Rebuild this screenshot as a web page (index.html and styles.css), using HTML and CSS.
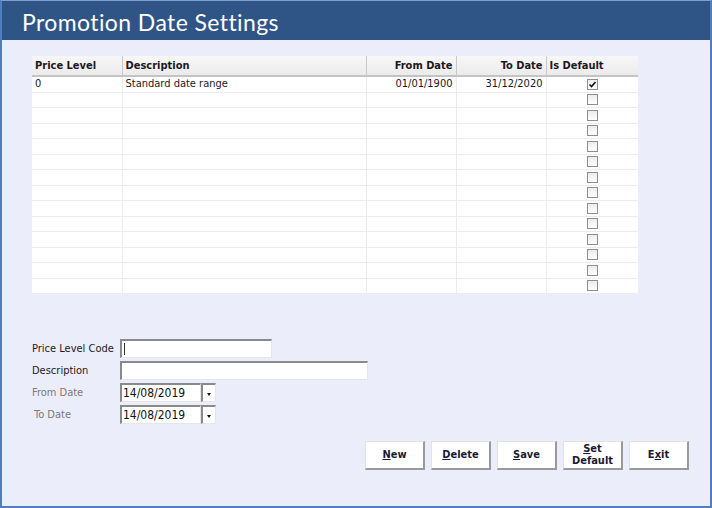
FILE: index.html
```html
<!DOCTYPE html>
<html lang="en">
<head>
  <meta charset="UTF-8">
  <title>Promotion Date Settings</title>
  <link rel="stylesheet" href="styles.css">
</head>
<body>
  <div class="window">
    <div class="title-bar">Promotion Date Settings</div>

    <div class="content">
      <!-- Date range grid -->
      <table class="grid" id="grid">
        <thead>
          <tr>
            <th class="col-level">Price Level</th>
            <th class="col-desc">Description</th>
            <th class="col-date right">From Date</th>
            <th class="col-date right">To Date</th>
            <th class="col-default">Is Default</th>
          </tr>
        </thead>
        <tbody id="gridBody"></tbody>
      </table>

      <!-- Edit form -->
      <div class="form">
        <label class="field-label">Price Level Code</label>
        <div class="textbox short"><span class="caret"></span></div>

        <label class="field-label">Description</label>
        <div class="textbox long"></div>

        <label class="field-label muted">From Date</label>
        <div class="datebox">
          <div class="textbox date">14/08/2019</div>
          <div class="drop"><span class="arrow"></span></div>
        </div>

        <label class="field-label muted indent">To Date</label>
        <div class="datebox">
          <div class="textbox date">14/08/2019</div>
          <div class="drop"><span class="arrow"></span></div>
        </div>
      </div>

      <div class="buttons">
        <button><u>N</u>ew</button>
        <button><u>D</u>elete</button>
        <button><u>S</u>ave</button>
        <button><u>S</u>et<br>Default</button>
        <button>E<u>x</u>it</button>
      </div>
    </div>
  </div>

  <script>
    // Promotion date rows
    const rows = [
      { level: "0", desc: "Standard date range", from: "01/01/1900", to: "31/12/2020", isDefault: true }
    ];
    const totalRows = 14;

    const checkSvg = '<svg width="9" height="9" viewBox="0 0 9 9"><path d="M1.5 4.5 L3.5 6.5 L7.5 2" fill="none" stroke="#111" stroke-width="1.6"/></svg>';

    const body = document.getElementById("gridBody");
    for (let i = 0; i < totalRows; i++) {
      const r = rows[i] || { level: "", desc: "", from: "", to: "", isDefault: false };
      body.innerHTML += `
        <tr>
          <td>${r.level}</td>
          <td>${r.desc}</td>
          <td class="right">${r.from}</td>
          <td class="right">${r.to}</td>
          <td class="center"><span class="check">${r.isDefault ? checkSvg : ""}</span></td>
        </tr>`;
    }
  </script>
</body>
</html>
```

FILE: styles.css
```css
body {
  margin: 0;
  font-family: "DejaVu Sans Condensed", "DejaVu Sans", sans-serif;
  font-size: 11px;
  color: #1c1822;
}
.window {
  width: 712px;
  height: 508px;
  box-sizing: border-box;
  background-color: #ecedfb;
  border: 2px solid #4f7fbe;
  border-top: 1px solid #7c9fd0;
  display: flex;
  flex-direction: column;
}
.title-bar {
  height: 39px;
  background-color: #2f5587;
  color: #fff;
  font-family: "Lato", sans-serif;
  font-size: 23px;
  letter-spacing: 0.4px;
  line-height: 42px;
  padding-left: 20px;
  flex-shrink: 0;
}
.content {
  padding: 16px 21px 0 30px;
}
.grid {
  width: 606px;
  border-collapse: collapse;
  background: #fff;
  table-layout: fixed;
}
.grid th {
  box-sizing: border-box;
  height: 20px;
  padding: 0 3px;
  text-align: left;
  font-weight: bold;
  background: linear-gradient(#f7f7f7, #ebebeb);
  border-right: 1px solid #c9c9c9;
  border-bottom: 2px solid #c4c4c4;
  white-space: nowrap;
}
.grid th:last-child {
  border-right: none;
}
.col-level { width: 90px; }
.col-desc { width: 244px; }
.col-date { width: 90px; }
.grid td {
  height: 14.5px;
  padding: 0 3px;
  border-right: 1px solid #ececec;
  border-bottom: 1px solid #ececec;
  white-space: nowrap;
  line-height: 14px;
}
.grid td:last-child {
  border-right: none;
}
.grid .right {
  text-align: right;
}
.grid .center {
  text-align: center;
}
.check {
  display: inline-block;
  width: 9px;
  height: 9px;
  border: 1px solid #8e8e8e;
  background: linear-gradient(#ececec, #fff);
  vertical-align: middle;
  line-height: 0;
}
.form {
  margin-top: 45px;
  display: grid;
  grid-template-columns: 88px auto;
  row-gap: 3px;
  align-items: center;
  justify-items: start;
}
.field-label.muted {
  color: #7a7a7a;
}
.field-label.indent {
  padding-left: 2px;
}
.textbox {
  height: 19px;
  box-sizing: border-box;
  background: #fff;
  border: 1px solid #e6e6e6;
  border-top: 2px solid #8a8a8a;
  border-left: 2px solid #8a8a8a;
  padding-left: 1px;
  line-height: 16px;
  font-size: 12px;
  display: flex;
  align-items: center;
}
.textbox.short {
  width: 152px;
}
.textbox.long {
  width: 248px;
}
.textbox.date {
  width: 81px;
  color: #111;
}
.caret {
  width: 1px;
  height: 12px;
  background: #333;
  margin-left: 1px;
}
.datebox {
  display: flex;
}
.drop {
  width: 15px;
  height: 19px;
  box-sizing: border-box;
  background: #fff;
  border: 1px solid #e6e6e6;
  border-top: 2px solid #8a8a8a;
  border-left: 2px solid #8a8a8a;
  display: flex;
  align-items: center;
  justify-content: center;
}
.arrow {
  width: 0;
  height: 0;
  border-left: 2.5px solid transparent;
  border-right: 2.5px solid transparent;
  border-top: 3px solid #111;
  margin-top: 2px;
}
.buttons {
  margin-top: 17px;
  display: flex;
  justify-content: flex-end;
  gap: 6px;
}
.buttons button {
  width: 60px;
  height: 29px;
  padding: 0;
  background: #fff;
  border: 1px solid #e2e2e2;
  border-right: 2px solid #9a9a9a;
  border-bottom: 2px solid #9a9a9a;
  font-family: "DejaVu Sans Condensed", "DejaVu Sans", sans-serif;
  font-size: 11px;
  font-weight: bold;
  line-height: 12px;
  color: #1c1a33;
  cursor: pointer;
}
```
